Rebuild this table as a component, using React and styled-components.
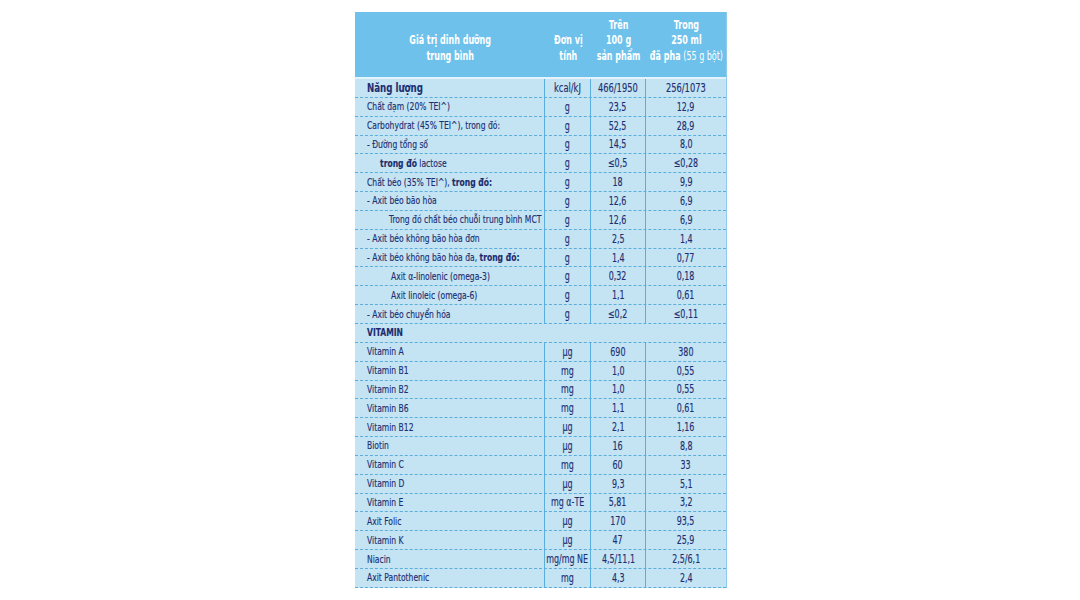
import styled, { createGlobalStyle } from "styled-components";

const GlobalStyle = createGlobalStyle`
  html, body {
    margin: 0;
    padding: 0;
    background: #ffffff;
  }
`;

// indent is the extra left offset in px for sub rows
const rows = [
  { label: "Năng lượng", unit: "kcal/kJ", a: "466/1950", b: "256/1073", strong: true },
  { label: "Chất đạm (20% TEI^)", unit: "g", a: "23,5", b: "12,9" },
  { label: "Carbohydrat (45% TEI^), trong đó:", unit: "g", a: "52,5", b: "28,9" },
  { label: "- Đường tổng số", unit: "g", a: "14,5", b: "8,0" },
  { label: <><b>trong đó</b> lactose</>, unit: "g", a: "≤0,5", b: "≤0,28", indent: 13 },
  { label: <>Chất béo (35% TEI^), <b>trong đó:</b></>, unit: "g", a: "18", b: "9,9" },
  { label: "- Axit béo bão hòa", unit: "g", a: "12,6", b: "6,9" },
  { label: "Trong đó chất béo chuỗi trung bình MCT", unit: "g", a: "12,6", b: "6,9", indent: 22 },
  { label: "- Axit béo không bão hòa đơn", unit: "g", a: "2,5", b: "1,4" },
  { label: <>- Axit béo không bão hòa đa, <b>trong đó:</b></>, unit: "g", a: "1,4", b: "0,77" },
  { label: "Axit α-linolenic (omega-3)", unit: "g", a: "0,32", b: "0,18", indent: 24 },
  { label: "Axit linoleic (omega-6)", unit: "g", a: "1,1", b: "0,61", indent: 24 },
  { label: "- Axit béo chuyển hóa", unit: "g", a: "≤0,2", b: "≤0,11" },
  { section: "VITAMIN" },
  { label: "Vitamin A", unit: "µg", a: "690", b: "380" },
  { label: "Vitamin B1", unit: "mg", a: "1,0", b: "0,55" },
  { label: "Vitamin B2", unit: "mg", a: "1,0", b: "0,55" },
  { label: "Vitamin B6", unit: "mg", a: "1,1", b: "0,61" },
  { label: "Vitamin B12", unit: "µg", a: "2,1", b: "1,16" },
  { label: "Biotin", unit: "µg", a: "16", b: "8,8" },
  { label: "Vitamin C", unit: "mg", a: "60", b: "33" },
  { label: "Vitamin D", unit: "µg", a: "9,3", b: "5,1" },
  { label: "Vitamin E", unit: "mg α-TE", a: "5,81", b: "3,2" },
  { label: "Axit Folic", unit: "µg", a: "170", b: "93,5" },
  { label: "Vitamin K", unit: "µg", a: "47", b: "25,9" },
  { label: "Niacin", unit: "mg/mg NE", a: "4,5/11,1", b: "2,5/6,1" },
  { label: "Axit Pantothenic", unit: "mg", a: "4,3", b: "2,4" },
];

function App() {
  return (
    <Page>
      <GlobalStyle />
      <Panel>
        <HeaderRow>
          <HeadCell>
            <HeadText>
              Giá trị dinh dưỡng
              <br />
              trung bình
            </HeadText>
          </HeadCell>
          <HeadCell>
            <HeadText>
              Đơn vị
              <br />
              tính
            </HeadText>
          </HeadCell>
          <HeadCell>
            <HeadText>
              Trên
              <br />
              100 g
              <br />
              sản phẩm
            </HeadText>
          </HeadCell>
          <HeadCell>
            <HeadText>
              Trong
              <br />
              250 ml
              <br />
              đã pha <Light>(55 g bột)</Light>
            </HeadText>
          </HeadCell>
        </HeaderRow>
        <Body>
          {rows.map((row, i) =>
            row.section ? (
              <SectionRow key={i}>
                <Squeeze $origin="left">{row.section}</Squeeze>
              </SectionRow>
            ) : (
              <Row key={i}>
                <LabelCell $indent={row.indent || 0} $strong={row.strong}>
                  <Squeeze $origin="left">{row.label}</Squeeze>
                </LabelCell>
                <ValueCell $strong={row.strong}>
                  <Squeeze>{row.unit}</Squeeze>
                </ValueCell>
                <ValueCell $strong={row.strong}>
                  <Squeeze>{row.a}</Squeeze>
                </ValueCell>
                <ValueCell $strong={row.strong} $last>
                  <Squeeze>{row.b}</Squeeze>
                </ValueCell>
              </Row>
            )
          )}
        </Body>
      </Panel>
    </Page>
  );
}

const Page = styled.div`
  display: flex;
  justify-content: center;
  padding: 12px 0 0 2px;
  font-family: "DejaVu Sans Condensed", "DejaVu Sans", sans-serif;
  font-stretch: condensed;
`;

const Panel = styled.div`
  width: 371px;
  background-color: #c4e3f3;
  border-right: 1px solid #8ccbe9;
`;

const HeaderRow = styled.div`
  display: grid;
  grid-template-columns: 190px 46px 55px 80px;
  align-items: end;
  height: 67px;
  padding-bottom: 13px;
  box-sizing: border-box;
  background-color: #6ec1ea;
  border-bottom: 2px solid #e4f3fb;
`;

const HeadCell = styled.div`
  display: flex;
  justify-content: center;
  color: #ffffff;
  font-size: 12px;
  font-weight: bold;
  line-height: 15.5px;
  text-align: center;
  white-space: nowrap;
`;

const HeadText = styled.span`
  display: inline-block;
  transform: scaleX(0.74);
  transform-origin: center;
`;

const Light = styled.span`
  font-weight: normal;
`;

const Body = styled.div`
  display: flex;
  flex-direction: column;
`;

const Row = styled.div`
  display: grid;
  grid-template-columns: 190px 46px 55px 80px;
  height: 18.85px;
  border-bottom: 1px dashed #5aaedc;
  box-sizing: border-box;
  color: #1d2f72;
`;

const SectionRow = styled.div`
  display: flex;
  align-items: center;
  height: 18.85px;
  padding-left: 12px;
  border-bottom: 1px dashed #5aaedc;
  box-sizing: border-box;
  color: #1c2b6c;
  font-size: 11px;
  font-weight: bold;
`;

const Squeeze = styled.span`
  display: inline-block;
  white-space: nowrap;
  transform: scaleX(0.77);
  transform-origin: ${(p) => p.$origin || "center"};
  -webkit-text-stroke: 0.15px currentColor;

  b {
    font-weight: bold;
    color: #1c2b6c;
  }
`;

const LabelCell = styled.div`
  display: flex;
  align-items: center;
  padding-left: ${(p) => 12 + p.$indent}px;
  border-right: 1px solid #5aaedc;
  font-size: ${(p) => (p.$strong ? "12.5px" : "11px")};
  font-weight: ${(p) => (p.$strong ? "bold" : "normal")};
`;

const ValueCell = styled.div`
  display: flex;
  align-items: center;
  justify-content: center;
  border-right: ${(p) => (p.$last ? "none" : "1px solid #5aaedc")};
  font-size: ${(p) => (p.$strong ? "12px" : "11.5px")};
`;

export default App;
